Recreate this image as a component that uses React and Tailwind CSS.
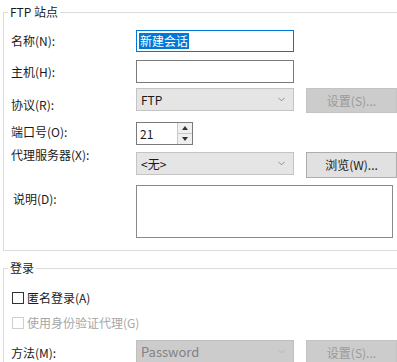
import { ChevronDown } from 'lucide-react';

const font = { fontFamily: '"Noto Sans CJK SC", "Noto Sans", sans-serif' };

const Label = ({ top, children, className = '' }) => (
    <div className={`w-[125px] shrink-0 leading-[16px] ${top} ${className}`}>{children}</div>
);

const Select = ({ value, disabled }) => (
    <div
        className={`w-[158px] h-[23px] flex items-center justify-between pl-[4px] pr-[6px] border ${
            disabled ? 'bg-[#cccccc] border-[#bfbfbf] text-[#838383] text-[13px]' : 'bg-[#e5e5e5] border-[#c4c4c4] text-[#1a1a1a]'
        }`}
    >
        <span className="leading-[16px]">{value}</span>
        <ChevronDown className={`w-[11px] h-[11px] ${disabled ? 'text-[#b0b0b0]' : 'text-[#707070]'}`} strokeWidth={1.6} />
    </div>
);

const Button = ({ children, disabled, h = 'h-[25px]' }) => (
    <div
        className={`ml-[12px] w-[91px] ${h} flex items-center justify-center border leading-[16px] ${
            disabled ? 'bg-[#cccccc] border-[#c4c4c4] text-[#9a9a9a]' : 'bg-[#e1e1e1] border-[#adadad] text-[#1a1a1a]'
        }`}
    >
        {children}
    </div>
);

export default function App() {
    return (
        <div className="w-[397px] h-[362px] overflow-hidden bg-white text-[12px] text-[#1a1a1a]" style={font}>
            {/* FTP 站点 */}
            <div className="relative mt-[12px] ml-[3px] w-[420px] border border-[#dcdcdc] pl-[7px] pt-[17px] pb-[12px]">
                <span className="absolute -top-[9px] left-[4px] bg-white px-[2px] leading-[16px]">FTP 站点</span>

                <div className="flex items-start h-[22px]">
                    <Label top="mt-[3px]">名称(N):</Label>
                    <div className="w-[158px] h-[22px] border border-[#0078d7] flex items-center pl-[2px]">
                        <span className="bg-[#0078d7] text-white leading-[16px] px-[1px]">新建会话</span>
                    </div>
                </div>

                <div className="flex items-start h-[23px] mt-[8px]">
                    <Label top="mt-[4px]">主机(H):</Label>
                    <div className="w-[158px] h-[23px] border border-[#7a7a7a]" />
                </div>

                <div className="flex items-start h-[25px] mt-[5px]">
                    <Label top="mt-[9px]">协议(R):</Label>
                    <Select value="FTP" />
                    <Button disabled>设置(S)...</Button>
                </div>

                <div className="flex items-start h-[23px] mt-[9px]">
                    <Label top="mt-[2px]">端口号(O):</Label>
                    <div className="w-[57px] h-[23px] border border-[#7a7a7a] flex">
                        <div className="flex-1 flex items-center pl-[3px] leading-[16px]">21</div>
                        <div className="w-[15px] flex flex-col border-l border-[#c8c8c8]">
                            <div className="flex-1 flex items-center justify-center bg-[#f0f0f0] border-b border-[#c8c8c8]">
                                <svg width="6" height="4" viewBox="0 0 6 4"><path d="M0 4 L3 0 L6 4 Z" fill="#333" /></svg>
                            </div>
                            <div className="flex-1 flex items-center justify-center bg-[#f0f0f0]">
                                <svg width="6" height="4" viewBox="0 0 6 4"><path d="M0 0 L3 4 L6 0 Z" fill="#333" /></svg>
                            </div>
                        </div>
                    </div>
                </div>

                <div className="flex items-start h-[27px] mt-[7px]">
                    <Label top="-mt-[5px]">代理服务器(X):</Label>
                    <Select value="<无>" />
                    <Button h="h-[26px]">浏览(W)...</Button>
                </div>

                <div className="flex items-start h-[53px] mt-[6px]">
                    <Label top="mt-[6px]" className="pl-[2px]">说明(D):</Label>
                    <div className="w-[257px] h-[53px] border border-[#8a8a8a]" />
                </div>
            </div>

            {/* 登录 */}
            <div className="relative mt-[17px] ml-[3px] w-[420px] h-[120px] border-t border-l border-[#dcdcdc] pl-[7px] pt-[21px]">
                <span className="absolute -top-[9px] left-[4px] bg-white px-[2px] leading-[16px]">登录</span>

                <div className="flex items-center h-[16px]">
                    <div className="w-[12px] h-[12px] border border-[#333333] bg-white ml-px" />
                    <span className="ml-[3px] leading-[16px]">匿名登录(A)</span>
                </div>

                <div className="flex items-center h-[16px] mt-[9px] text-[#a6a6a6]">
                    <div className="w-[12px] h-[12px] border border-[#cfcfcf] bg-white ml-px" />
                    <span className="ml-[3px] leading-[16px]">使用身份验证代理(G)</span>
                </div>

                <div className="flex items-start h-[25px] mt-[9px]">
                    <Label top="mt-[5px]">方法(M):</Label>
                    <Select value="Password" disabled />
                    <Button disabled>设置(S)...</Button>
                </div>
            </div>
        </div>
    );
}
